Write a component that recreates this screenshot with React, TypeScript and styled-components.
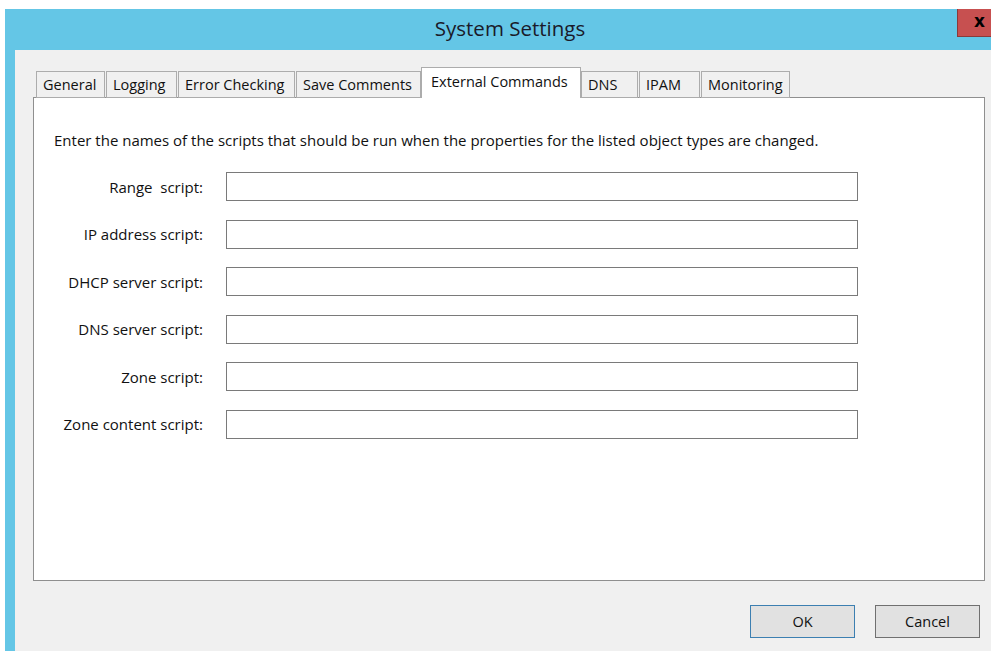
import React from "react";
import styled, { createGlobalStyle } from "styled-components";

const Global = createGlobalStyle`
  html, body { margin: 0; padding: 0; background: #ffffff; }
  body { overflow: hidden; font-family: "Open Sans", "Noto Sans", "Liberation Sans", sans-serif; }
`;

const Page = styled.div`
  width: 991px;
  height: 651px;
  overflow: hidden;
  background: #ffffff;
  padding: 9px 0 0 5px;
  box-sizing: border-box;
`;

const Window = styled.div`
  width: 1010px;
  height: 700px;
  background: #64c6e6;
  padding: 0 10px;
  box-sizing: border-box;
  display: flex;
  flex-direction: column;
`;

const TitleBar = styled.div`
  position: relative;
  height: 41px;
  display: flex;
  align-items: center;
  justify-content: center;
  padding-bottom: 3px;
  box-sizing: border-box;
  font-size: 20.5px;
  color: #1a1a2a;
`;

const CloseButton = styled.div`
  position: absolute;
  top: 0;
  right: 4px;
  width: 44px;
  height: 28px;
  background: #c75050;
  border-left: 1px solid #8a3a3a;
  border-bottom: 1px solid #8a3a3a;
  box-sizing: border-box;
  display: flex;
  align-items: center;
  justify-content: center;
  padding-bottom: 3px;
  font-family: "DejaVu Sans", sans-serif;
  font-weight: bold;
  font-size: 17px;
  color: #000;
`;

const Body = styled.div`
  flex: 1;
  background: #f0f0f0;
  padding: 18px 0 0 18px;
  display: flex;
  flex-direction: column;
`;

const TabStrip = styled.div`
  display: flex;
  align-items: flex-end;
  height: 30px;
  padding-left: 3px;
  position: relative;
  z-index: 1;
  margin-bottom: -1px;
`;

const Tab = styled.div<{ $active?: boolean; $w: number }>`
  width: ${(p) => p.$w}px;
  height: ${(p) => (p.$active ? 31 : 27)}px;
  box-sizing: border-box;
  border: 1px solid #acacac;
  border-bottom: ${(p) => (p.$active ? "none" : "1px solid #acacac")};
  background: ${(p) => (p.$active ? "#ffffff" : "#f0f0f0")};
  margin-right: ${(p) => (p.$active ? 0 : 1)}px;
  margin-left: ${(p) => (p.$active ? -1 : 0)}px;
  font-size: 14.5px;
  color: #111;
  display: flex;
  align-items: ${(p) => (p.$active ? "flex-start" : "center")};
  padding: ${(p) => (p.$active ? "4px 0 0 9px" : "0 0 0 6px")};
  white-space: nowrap;
`;

const Panel = styled.div`
  width: 952px;
  height: 484px;
  box-sizing: border-box;
  background: #ffffff;
  border: 1px solid #8f8f8f;
  padding: 32px 0 0 20px;
`;

const Intro = styled.div`
  font-size: 15px;
  color: #111;
  margin-bottom: 22px;
`;

const Form = styled.div`
  display: grid;
  grid-template-columns: 149px 632px;
  column-gap: 23px;
  row-gap: 18.6px;
`;

const Label = styled.div`
  font-size: 15px;
  color: #111;
  text-align: right;
  white-space: pre;
  align-self: center;
`;

const Field = styled.input`
  height: 29px;
  box-sizing: border-box;
  border: 1px solid #7a7a7a;
  background: #fff;
  outline: none;
  margin: 0;
`;

const Footer = styled.div`
  display: flex;
  justify-content: flex-end;
  gap: 20px;
  padding: 24px 5px 0 0;
  width: 952px;
  box-sizing: border-box;
`;

const Button = styled.div<{ $primary?: boolean }>`
  width: 105px;
  height: 33px;
  box-sizing: border-box;
  background: #e1e1e1;
  border: 1px solid ${(p) => (p.$primary ? "#3c7fb1" : "#707070")};
  display: flex;
  align-items: center;
  justify-content: center;
  font-size: 14.5px;
  color: #111;
`;

const tabs: { name: string; w: number; active?: boolean }[] = [
  { name: "General", w: 69 },
  { name: "Logging", w: 71 },
  { name: "Error Checking", w: 117 },
  { name: "Save Comments", w: 125 },
  { name: "External Commands", w: 160, active: true },
  { name: "DNS", w: 57 },
  { name: "IPAM", w: 61 },
  { name: "Monitoring", w: 89 },
];

const fields = [
  "Range  script:",
  "IP address script:",
  "DHCP server script:",
  "DNS server script:",
  "Zone script:",
  "Zone content script:",
];

export default function App() {
  return (
    <>
      <Global />
      <Page>
        <Window>
          <TitleBar>
            System Settings
            <CloseButton>x</CloseButton>
          </TitleBar>
          <Body>
            <TabStrip>
              {tabs.map((t) => (
                <Tab key={t.name} $w={t.w} $active={t.active}>
                  {t.name}
                </Tab>
              ))}
            </TabStrip>
            <Panel>
              <Intro>
                Enter the names of the scripts that should be run when the properties for the listed object types are changed.
              </Intro>
              <Form>
                {fields.map((f) => (
                  <React.Fragment key={f}>
                    <Label>{f}</Label>
                    <Field type="text" />
                  </React.Fragment>
                ))}
              </Form>
            </Panel>
            <Footer>
              <Button $primary>OK</Button>
              <Button>Cancel</Button>
            </Footer>
          </Body>
        </Window>
      </Page>
    </>
  );
}
